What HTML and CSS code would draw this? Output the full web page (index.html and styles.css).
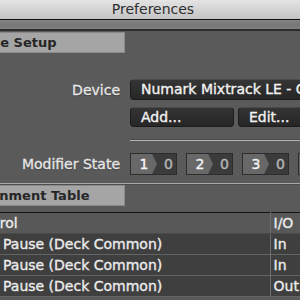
FILE: index.html
```html
<!DOCTYPE html>
<html lang="en">
<head>
  <meta charset="UTF-8" />
  <title>Preferences</title>
  <link rel="stylesheet" href="styles.css">
</head>
<body>
  <div class="window">
    <div class="titlebar">Preferences</div>
    <div class="toolbar"></div>

    <div class="panel">
      <div class="section-tab"><span class="tab-text">Device Setup</span></div>

      <div class="setup-form">
        <label class="field-label">Device</label>
        <div class="select">Numark Mixtrack LE - Controller</div>

        <span></span>
        <div class="button-row">
          <button class="btn btn-add" type="button">Add...</button>
          <button class="btn" type="button">Edit...</button>
        </div>

        <div class="rule"></div>

        <label class="field-label">Modifier State</label>
        <div class="modifiers">
          <div class="mod"><span class="mod-key">1</span><span class="mod-val">0</span></div>
          <div class="mod"><span class="mod-key">2</span><span class="mod-val">0</span></div>
          <div class="mod"><span class="mod-key">3</span><span class="mod-val">0</span></div>
          <div class="mod"><span class="mod-key">4</span><span class="mod-val">0</span></div>
        </div>
      </div>

      <div class="divider"></div>

      <div class="section-tab"><span class="tab-text">Assignment Table</span></div>

      <table class="assign-table">
        <colgroup><col class="col-control"><col class="col-io"></colgroup>
        <thead>
          <tr><th><span class="cell-clip">Control</span></th><th>I/O</th></tr>
        </thead>
        <tbody>
          <tr><td>Pause (Deck Common)</td><td>In</td></tr>
          <tr><td>Pause (Deck Common)</td><td>In</td></tr>
          <tr><td>Pause (Deck Common)</td><td>Out</td></tr>
        </tbody>
      </table>
    </div>
  </div>
</body>
</html>
```

FILE: styles.css
```css
body {
  margin: 0;
  background: #5a5a5a;
  font-family: "DejaVu Sans", sans-serif;
}
.window {
  width: 300px;
  height: 300px;
  overflow: hidden;
}
.titlebar {
  height: 19px;
  line-height: 19px;
  padding-left: 6px;
  background: linear-gradient(#e4e4e4, #c4c4c4);
  color: #2e2e2e;
  font-size: 14px;
  text-align: center;
  border-bottom: 1px solid #111;
}
.toolbar {
  height: 9px;
  background: linear-gradient(#858585, #777 50%, #7e7e7e);
  border-bottom: 2px solid #2c2c2c;
}
.panel {
  padding-top: 1px;
}
.section-tab {
  width: 124px;
  height: 19px;
  line-height: 19px;
  background: #a5a5a5;
  border: 1px solid #8a8a8a;
  border-left: none;
  color: #262626;
  font-size: 13px;
  font-weight: bold;
  overflow: hidden;
  white-space: nowrap;
}
.tab-text {
  display: inline-block;
  margin-left: -40px;
}
.setup-form {
  display: grid;
  grid-template-columns: 120px 230px;
  column-gap: 10px;
  align-items: center;
  margin-top: 26px;
}
.field-label {
  text-align: right;
  color: #e6e6e6;
  font-size: 14px;
  -webkit-text-stroke: 0.35px #e6e6e6;
  text-shadow: 0 1px 1px #333;
}
.select {
  height: 19px;
  line-height: 19px;
  padding-left: 10px;
  background: linear-gradient(#353535, #262626);
  border: 1px solid #1b1b1b;
  border-top-color: #4a4a4a;
  border-radius: 4px;
  color: #f2f2f2;
  font-size: 14px;
  -webkit-text-stroke: 0.35px #f2f2f2;
  white-space: nowrap;
  overflow: hidden;
}
.button-row {
  display: flex;
  gap: 4px;
  margin-top: 7px;
}
.btn {
  height: 20px;
  padding: 0 0 0 10px;
  background: linear-gradient(#343434, #262626);
  border: 1px solid #1b1b1b;
  border-top-color: #4a4a4a;
  border-radius: 4px;
  color: #f2f2f2;
  font-family: inherit;
  font-size: 14px;
  -webkit-text-stroke: 0.35px #f2f2f2;
  text-align: left;
  width: 104px;
}
.rule {
  grid-column: 2;
  height: 1px;
  margin: 12px 0 12px;
  background: #b4b4b4;
  border-top: 1px solid #4a4a4a;
}
.modifiers {
  display: flex;
  gap: 9px;
}
.mod {
  display: flex;
  width: 45px;
  height: 20px;
  background: #3b3b3b;
  border: 1px solid #2c2c2c;
  font-size: 14px;
  line-height: 20px;
  -webkit-text-stroke: 0.35px currentColor;
}
.mod-key {
  width: 26px;
  padding-right: 4px;
  text-align: center;
  background: #686868;
  color: #f4f4f4;
  clip-path: polygon(0 0, 21px 0, 26px 50%, 21px 100%, 0 100%);
}
.mod-val {
  flex: 1;
  text-align: center;
  color: #b8b8b8;
}
.divider {
  height: 1px;
  margin-top: 8px;
  background: #a8a8a8;
  border-bottom: 1px solid #4e4e4e;
}
.assign-table {
  table-layout: fixed;
  width: 340px;
  margin-top: 6px;
  border-collapse: collapse;
  border-top: 1px solid #141414;
  font-size: 14px;
  color: #ececec;
}
.col-control {
  width: 270px;
}
.assign-table th,
.assign-table td {
  height: 20px;
  padding: 0 0 0 3px;
  text-align: left;
  font-weight: normal;
  -webkit-text-stroke: 0.35px #ececec;
  white-space: nowrap;
  overflow: hidden;
  border-bottom: 1px solid #646464;
  border-right: 1px solid #6e6e6e;
}
.assign-table th {
  background: #585858;
  border-bottom-color: #4a4a4a;
}
.assign-table td {
  background: #3f3f3f;
}
.cell-clip {
  display: inline-block;
  margin-left: -36px;
}
```
